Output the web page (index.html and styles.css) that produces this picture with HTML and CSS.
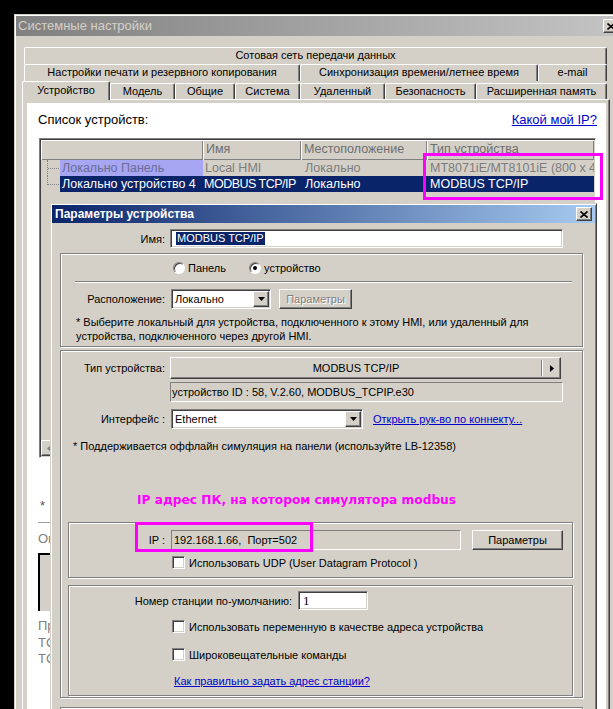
FILE: index.html
```html
<!DOCTYPE html>
<html lang="ru">
<head>
<meta charset="utf-8">
<title>Системные настройки</title>
<link rel="stylesheet" href="styles.css">
</head>
<body>
<div class="screen">
  <div class="win">
    <div class="win-title">
      <span class="win-caption">Системные настройки</span>
      <span class="xbtn"><svg width="8" height="7" viewBox="0 0 8 7"><path d="M0.5 0.5 L7.5 6.5 M7.5 0.5 L0.5 6.5" stroke="#000" stroke-width="1.6" fill="none"/></svg></span>
    </div>
    <div class="tabs">
      <div class="tabrow r1"><div class="tab">Сотовая сеть передачи данных</div></div>
      <div class="tabrow r2">
        <div class="tab">Настройки печати и резервного копирования</div>
        <div class="tab">Синхронизация времени/летнее время</div>
        <div class="tab">e-mail</div>
      </div>
      <div class="tabrow r3">
        <div class="tab sel">Устройство</div>
        <div class="tab">Модель</div>
        <div class="tab">Общие</div>
        <div class="tab">Система</div>
        <div class="tab">Удаленный</div>
        <div class="tab">Безопасность</div>
        <div class="tab">Расширенная память</div>
      </div>
    </div>
    <div class="panel">
      <div class="page">
        <div class="page-head">
          <span>Список устройств:</span>
          <a class="link">Какой мой IP?</a>
        </div>
        <div class="list">
          <div class="lv-head">
            <span></span><span>Имя</span><span>Местоположение</span><span>Тип устройства</span>
          </div>
          <div class="lv-row dim">
            <div class="c0"><span class="tree"></span><span class="name lav">Локально Панель</span></div>
            <span class="cell">Local HMI</span>
            <span class="cell">Локально</span>
            <span class="cell">MT8071iE/MT8101iE (800 x 4</span>
          </div>
          <div class="lv-row selrow">
            <div class="c0"><span class="tree last"></span><span class="name">Локально устройство 4</span></div>
            <span class="cell caps">MODBUS TCP/IP</span>
            <span class="cell">Локально</span>
            <span class="cell">MODBUS TCP/IP</span>
          </div>
          <div class="sbar">
            <span class="sb-btn"><svg width="4" height="7" viewBox="0 0 4 7"><polygon points="4,0 0,3.5 4,7" fill="#808080"/></svg></span>
            <span class="sb-track"></span>
          </div>
        </div>
        <div class="below">
          <div class="b-star">*</div>
          <div class="b-line"></div>
          <div class="b-text">Описание</div>
          <div class="b-box"></div>
          <div class="b-lines">Протокол<br>TCP/IP<br>TCP/IP</div>
        </div>
      </div>
    </div>
  </div>

  <div class="dlg">
    <div class="dlg-title">
      <span>Параметры устройства</span>
      <span class="xbtn"><svg width="8" height="7" viewBox="0 0 8 7"><path d="M0.5 0.5 L7.5 6.5 M7.5 0.5 L0.5 6.5" stroke="#000" stroke-width="1.6" fill="none"/></svg></span>
    </div>
    <div class="dlg-body">
      <div class="frow name-row">
        <span class="lbl l-name">Имя:</span>
        <div class="field name-field"><span class="seltext">MODBUS TCP/IP</span></div>
      </div>

      <div class="group g1">
        <div class="radios">
          <span class="radio-item r-panel"><span class="radio"></span>Панель</span>
          <span class="radio-item"><span class="radio on"></span>устройство</span>
        </div>
        <div class="etch"></div>
        <div class="frow loc-row">
          <span class="lbl l-g">Расположение:</span>
          <div class="combo loc-combo"><span class="combo-text">Локально</span><span class="combo-btn"><svg width="7" height="4" viewBox="0 0 7 4"><polygon points="0,0 7,0 3.5,4" fill="#000"/></svg></span></div>
          <div class="btn disabled loc-btn">Параметры</div>
        </div>
        <p class="note n1">* Выберите локальный для устройства, подключенного к этому HMI, или удаленный для<br>устройства, подключенного через другой HMI.</p>
      </div>

      <div class="group g2">
        <div class="frow type-row">
          <span class="lbl l-g">Тип устройства:</span>
          <div class="btn type-btn"><span class="type-text">MODBUS TCP/IP</span><span class="type-sep"></span><span class="type-arrow"><svg width="4" height="7" viewBox="0 0 4 7"><polygon points="0,0 4,3.5 0,7" fill="#000"/></svg></span></div>
        </div>
        <div class="frow id-row">
          <span class="lbl l-g"></span>
          <div class="rofield id-field">устройство ID : 58, V.2.60, MODBUS_TCPIP.e30</div>
        </div>
        <div class="frow if-row">
          <span class="lbl l-g">Интерфейс :</span>
          <div class="combo if-combo"><span class="combo-text">Ethernet</span><span class="combo-btn"><svg width="7" height="4" viewBox="0 0 7 4"><polygon points="0,0 7,0 3.5,4" fill="#000"/></svg></span></div>
          <a class="link if-link">Открыть рук-во по коннекту...</a>
        </div>
        <p class="note n2">* Поддерживается оффлайн симуляция на панели (используйте LB-12358)</p>
        <p class="hint">IP адрес ПК, на котором симулятора modbus</p>

        <div class="group g3">
          <div class="frow ip-row">
            <span class="lbl l-ip">IP :</span>
            <div class="rofield ip-field">192.168.1.66,&nbsp; Порт=502</div>
            <div class="btn ip-btn">Параметры</div>
          </div>
          <div class="check c-udp"><span class="box"></span>Использовать UDP (User Datagram Protocol )</div>
        </div>

        <div class="group g4">
          <div class="frow st-row">
            <span class="lbl l-st">Номер станции по-умолчанию:</span>
            <div class="field st-field">1</div>
          </div>
          <div class="check c1"><span class="box"></span>Использовать переменную в качестве адреса устройства</div>
          <div class="check c2"><span class="box"></span>Широковещательные команды</div>
          <a class="link st-link">Как правильно задать адрес станции?</a>
        </div>
      </div>
      <div class="group g5"></div>
    </div>
  </div>

  <div class="mark mark-list"></div>
  <div class="mark mark-ip"></div>
</div>
</body>
</html>
```
FILE: styles.css
```css
* { box-sizing: border-box; }
html, body { margin: 0; padding: 0; }
body {
  background: #000;
  font-family: "Liberation Sans", Arial, sans-serif;
  font-size: 11px;
  color: #000;
}
.screen {
  position: relative;
  width: 613px;
  height: 709px;
  overflow: hidden;
  padding: 14px 0 0 14px;
  background: #000;
}

/* outer window */
.win {
  width: 609px;
  height: 720px;
  background: #d4d0c8;
  padding: 2px;
  box-shadow: inset 1px 1px 0 #d4d0c8, inset 2px 2px 0 #fff;
}
.win-title {
  height: 20px;
  display: flex;
  align-items: center;
  padding-left: 2px;
  background: linear-gradient(90deg, #808080, #c4c4c4);
  color: #d4d0c8;
  font-size: 13px;
}
.win-caption { line-height: 20px; }
.xbtn {
  margin-left: auto;
  margin-right: 2px;
  width: 16px;
  height: 14px;
  display: flex;
  align-items: center;
  justify-content: center;
  background: #d4d0c8;
  border: 1px solid;
  border-color: #fff #404040 #404040 #fff;
  box-shadow: inset -1px -1px 0 #808080;
}
.dlg-title .xbtn { margin-right: 3px; }

/* tabs */
.tabs { margin: 11px 0 0 6px; width: 585px; }
.tabrow { display: grid; height: 17px; }
.r1 { grid-template-columns: 1fr; padding-left: 2px; }
.r2 { grid-template-columns: 276px 238px 1fr; padding-left: 2px; }
.r3 { grid-template-columns: 88px 65px 60px 65px 85px 91px 1fr; height: 18px; align-items: end; }
.tab {
  height: 17px;
  background: #d4d0c8;
  border-top: 1px solid #fff;
  border-left: 1px solid #fff;
  border-right: 1px solid #404040;
  box-shadow: inset -1px 0 0 #808080;
  border-radius: 2px 2px 0 0;
  text-align: center;
  line-height: 15px;
  white-space: nowrap;
  overflow: hidden;
}
.r3 .tab { height: 16px; }
.r3 .tab.sel {
  height: 19px;
  position: relative;
  z-index: 1;
  margin-bottom: -1px;
  line-height: 16px;
}

/* panel & page */
.panel {
  margin-left: 6px;
  width: 588px;
  height: 620px;
  border-top: 1px solid #fff;
  border-left: 1px solid #fff;
  border-right: 1px solid #404040;
  box-shadow: inset -1px 0 0 #808080;
  padding: 3px 3px 0 4px;
}
.page {
  background: #fff;
  height: 100%;
  font-size: 13px;
}
.page-head {
  display: flex;
  justify-content: space-between;
  padding: 9px 9px 0 11px;
  height: 25px;
  line-height: 16px;
}
.link { color: #0000cc; text-decoration: underline; cursor: pointer; }

/* list view */
.list {
  margin: 10px 0 0 12px;
  width: 557px;
  height: 320px;
  display: flex;
  flex-direction: column;
  background: #d4d0c8;
  border: 1px solid;
  border-color: #808080 #fff #fff #808080;
  box-shadow: inset 1px 1px 0 #404040, inset -1px -1px 0 #d4d0c8;
  padding: 1px;
  overflow: hidden;
  font-size: 12.5px;
}
.lv-head, .lv-row {
  display: grid;
  grid-template-columns: 162px 98px 126px 1fr;
}
.lv-head { height: 20px; }
.lv-head span {
  box-shadow: inset 1px 1px 0 #fff, inset -1px -1px 0 #808080;
  padding-left: 3px;
  line-height: 19px;
  color: #6e6e6e;
  white-space: nowrap;
  overflow: hidden;
}
.lv-row { height: 16px; line-height: 16px; white-space: nowrap; }
.c0 { display: flex; }
.tree { width: 19px; position: relative; }
.tree::before {
  content: "";
  position: absolute;
  left: 6px;
  top: 0;
  height: 16px;
  border-left: 1px dotted #808080;
}
.tree.last::before { height: 9px; }
.tree::after {
  content: "";
  position: absolute;
  left: 7px;
  top: 8px;
  width: 11px;
  border-top: 1px dotted #808080;
}
.name { flex: 1; padding-left: 2px; overflow: hidden; }
.cell { padding-left: 2px; overflow: hidden; }
.cell.caps { letter-spacing: -0.5px; padding-left: 1px; }
.lv-row .cell:nth-child(3) { padding-left: 4px; }
.lv-row .cell:nth-child(4) { padding-left: 3px; }
.dim { color: #7c7c7c; }
.lav { background: #a6a6f2; color: #6c6c9a; }
.selrow .name, .selrow .cell { background: #0a246a; color: #fff; }
.sbar { margin-top: auto; height: 16px; display: flex; }
.sb-btn {
  width: 16px;
  height: 16px;
  display: flex;
  align-items: center;
  justify-content: center;
  background: #d4d0c8;
  border: 1px solid;
  border-color: #fff #404040 #404040 #fff;
  box-shadow: inset -1px -1px 0 #808080;
}
.sb-track { flex: 1; background: #ebe9e4; }

/* area below list */
.below { padding-left: 11px; color: #808080; }
.b-star { margin-top: 41px; padding-left: 2px; line-height: 14px; color: #555; }
.b-line { margin-top: 9px; width: 540px; height: 1px; background: #a0a0a0; }
.b-text { margin-top: 8px; line-height: 16px; }
.b-box {
  margin-top: 6px;
  width: 540px;
  height: 58px;
  background: #d4d0c8;
  border-top: 2px solid #000;
  border-left: 2px solid #000;
}
.b-lines { margin-top: 7px; line-height: 16.5px; }

/* dialog */
.dlg {
  position: absolute;
  left: 50px;
  top: 203px;
  width: 547px;
  height: 520px;
  background: #d4d0c8;
  border: 1px solid;
  border-color: #d4d0c8 #404040 #404040 #d4d0c8;
  box-shadow: inset 1px 1px 0 #fff, inset -1px -1px 0 #808080;
  padding: 1px;
}
.dlg-title {
  height: 18px;
  display: flex;
  align-items: center;
  padding-left: 3px;
  background: linear-gradient(90deg, #0a246a, #a6caf0);
  color: #fff;
  font-weight: bold;
  font-size: 12px;
}
.dlg-body { padding: 6px 12px 0 8px; }

.frow { display: flex; align-items: center; }
.lbl { text-align: right; white-space: nowrap; flex: none; }
.l-name { width: 105px; }
.l-g { width: 104px; }
.l-ip { width: 96px; }
.l-st { width: 223px; }

.field {
  background: #fff;
  border: 1px solid;
  border-color: #808080 #fff #fff #808080;
  box-shadow: inset 1px 1px 0 #404040, inset -1px -1px 0 #d4d0c8;
  white-space: nowrap;
}
.rofield {
  background: #d4d0c8;
  border: 1px solid;
  border-color: #808080 #fff #fff #808080;
  white-space: nowrap;
  line-height: 18px;
  padding-left: 1px;
}
.name-row { height: 19px; }
.name-field {
  margin-left: 5px;
  width: 393px;
  height: 19px;
  padding: 2px 0 0 5px;
}
.seltext {
  display: inline-block;
  background: #0a246a;
  color: #fff;
  line-height: 13px;
  padding: 0 1px;
}

.group {
  border: 1px solid #808080;
  box-shadow: inset 1px 1px 0 #fff, 1px 1px 0 #fff;
}
.g1 { margin-top: 5px; height: 94px; padding-top: 7px; }
.radios { display: flex; align-items: center; height: 14px; margin-left: 112px; }
.radio-item { display: flex; align-items: center; gap: 3px; }
.r-panel { width: 76px; }
.radio {
  width: 12px;
  height: 12px;
  border-radius: 50%;
  background: #fff;
  border: 1px solid;
  border-color: #808080 #fff #fff #808080;
  box-shadow: inset 1px 1px 0 #404040;
  position: relative;
}
.radio.on::after {
  content: "";
  position: absolute;
  left: 3px;
  top: 3px;
  width: 4px;
  height: 4px;
  border-radius: 50%;
  background: #000;
}
.etch {
  margin: 6px 10px 0 14px;
  height: 2px;
  border-top: 1px solid #808080;
  border-bottom: 1px solid #fff;
}
.loc-row { margin-top: 6px; height: 20px; }
.combo {
  display: flex;
  height: 20px;
  background: #fff;
  border: 1px solid;
  border-color: #808080 #fff #fff #808080;
  box-shadow: inset 1px 1px 0 #404040, inset -1px -1px 0 #d4d0c8;
  padding: 1px;
}
.combo-text { flex: 1; padding-left: 2px; line-height: 16px; }
.combo-btn {
  width: 16px;
  height: 16px;
  display: flex;
  align-items: center;
  justify-content: center;
  background: #d4d0c8;
  border: 1px solid;
  border-color: #fff #404040 #404040 #fff;
  box-shadow: inset -1px -1px 0 #808080;
}
.loc-combo { margin-left: 6px; width: 100px; }
.btn {
  height: 20px;
  background: #d4d0c8;
  border: 1px solid;
  border-color: #fff #404040 #404040 #fff;
  box-shadow: inset -1px -1px 0 #808080;
  text-align: center;
  line-height: 18px;
  white-space: nowrap;
}
.btn.disabled { color: #808080; text-shadow: 1px 1px 0 #fff; }
.loc-btn { margin-left: 8px; width: 73px; }
.note { margin: 6px 0 0 15px; line-height: 14px; white-space: nowrap; }

.g2 { margin-top: 3px; height: 348px; padding-top: 6px; }
.type-row { height: 22px; }
.type-btn { margin-left: 5px; width: 391px; height: 22px; display: flex; align-items: center; }
.type-text { flex: 1; text-align: center; line-height: 20px; }
.type-sep { width: 2px; height: 16px; border-left: 1px solid #808080; border-right: 1px solid #fff; }
.type-arrow { width: 17px; display: flex; justify-content: center; align-items: center; }
.id-row { margin-top: 3px; height: 20px; }
.id-field { margin-left: 5px; width: 393px; height: 20px; }
.if-row { margin-top: 7px; height: 20px; }
.if-combo { margin-left: 6px; width: 192px; }
.if-link { margin-left: 10px; white-space: nowrap; }
.n2 { margin: 10px 0 0 12px; }
.hint {
  margin: 40px 0 0 76px;
  line-height: 14px;
  font-family: "DejaVu Sans", Verdana, sans-serif;
  font-weight: bold;
  font-size: 12.2px;
  color: #ff00ff;
  white-space: nowrap;
}

.g3 { margin: 15px 9px 0 7px; height: 56px; padding-top: 7px; }
.ip-row { height: 20px; }
.ip-field { margin-left: 6px; width: 290px; height: 20px; padding-left: 2px; }
.ip-btn { margin-left: 11px; width: 91px; }
.check { display: flex; align-items: center; gap: 4px; height: 13px; padding-left: 103px; white-space: nowrap; }
.box {
  width: 13px;
  height: 13px;
  flex: none;
  background: #fff;
  border: 1px solid;
  border-color: #808080 #fff #fff #808080;
  box-shadow: inset 1px 1px 0 #404040, inset -1px -1px 0 #d4d0c8;
}
.c-udp { margin-top: 6px; }

.g4 { margin: 7px 9px 0 7px; height: 111px; padding-top: 5px; }
.st-row { height: 19px; }
.st-field {
  margin-left: 6px;
  width: 70px;
  height: 19px;
  padding-left: 4px;
  line-height: 17px;
  font-family: "Liberation Serif", "Times New Roman", serif;
  font-size: 13px;
}
.c1 { margin-top: 10px; }
.c2 { margin-top: 15px; }
.st-link { display: block; margin: 13px 0 0 105px; line-height: 14px; width: max-content; }
.g5 { margin-top: 9px; height: 40px; }

/* annotation frames */
.mark { position: absolute; border: 3px solid #ff00ff; }
.mark-list { left: 423px; top: 153px; width: 180px; height: 47px; }
.mark-ip { left: 135px; top: 522px; width: 178px; height: 30px; }
```
